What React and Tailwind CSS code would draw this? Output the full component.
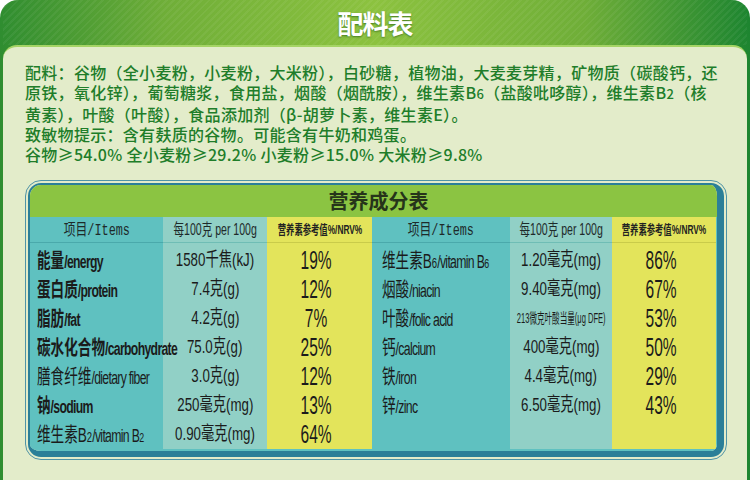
import React from "react";

const leftRows = [
  { cn: "能量", en: "energy", v: "1580千焦(kJ)", p: "19%", b: true },
  { cn: "蛋白质", en: "protein", v: "7.4克(g)", p: "12%", b: true },
  { cn: "脂肪", en: "fat", v: "4.2克(g)", p: "7%", b: true },
  { cn: "碳水化合物", en: "carbohydrate", v: "75.0克(g)", p: "25%", b: true },
  { cn: "膳食纤维", en: "dietary fiber", v: "3.0克(g)", p: "12%" },
  { cn: "钠", en: "sodium", v: "250毫克(mg)", p: "13%", b: true },
  { cn: "维生素B2", en: "vitamin B2", v: "0.90毫克(mg)", p: "64%" },
];

const rightRows = [
  { cn: "维生素B6", en: "vitamin B6", v: "1.20毫克(mg)", p: "86%" },
  { cn: "烟酸", en: "niacin", v: "9.40毫克(mg)", p: "67%" },
  { cn: "叶酸", en: "folic acid", v: "213微克叶酸当量(μg DFE)", p: "53%", tiny: true },
  { cn: "钙", en: "calcium", v: "400毫克(mg)", p: "50%" },
  { cn: "铁", en: "iron", v: "4.4毫克(mg)", p: "29%" },
  { cn: "锌", en: "zinc", v: "6.50毫克(mg)", p: "43%" },
];

// small "6" / "2" after B, like the print on the box
const sub = (s, small = "text-[13px]") =>
  s.split(/(B[26])/).map((part, i) =>
    /^B[26]$/.test(part) ? (
      <span key={i}>
        B<span className={small}>{part[1]}</span>
      </span>
    ) : (
      part
    )
  );

const sans = "font-['Liberation_Sans','Noto_Sans_CJK_SC',sans-serif]";

const Half = ({ rows, padL }) => (
  <>
    {/* name column */}
    <div className="flex flex-col bg-[#5fc1c0]">
      <div className="h-[26px] flex items-center justify-center border-b border-[#4aa9ab]">
        <span className="inline-block whitespace-nowrap scale-x-[0.74] text-[16px] text-[#1e2a2a]">
          <span className="font-['Noto_Sans_CJK_SC',sans-serif]">项目</span>
          <span className="font-['Liberation_Mono',monospace]">/Items</span>
        </span>
      </div>
      <div className="pt-[3px]">
        {rows.map((r) => (
          <div key={r.cn} className={`h-[29px] flex items-center ${padL}`}>
            <span
              className={`inline-block whitespace-nowrap origin-left scale-x-[0.68] text-[20px] text-[#1b1b1b] ${sans} ${
                r.b ? "font-bold" : ""
              }`}
            >
              {sub(r.cn, "text-[14px]")}
              <span className="text-[18px] tracking-[-1px]">/{sub(r.en, "text-[13px]")}</span>
            </span>
          </div>
        ))}
      </div>
    </div>

    {/* per 100g column */}
    <div className="flex flex-col bg-[#91d0c6]">
      <div className="h-[26px] flex items-center justify-center border-b border-[#6fbdb5]">
        <span className={`inline-block whitespace-nowrap scale-x-[0.66] text-[16px] text-[#1e2a2a] ${sans}`}>
          每100克 per 100g
        </span>
      </div>
      <div className="pt-[3px]">
        {rows.map((r) => (
          <div key={r.cn} className="h-[29px] flex items-center justify-center">
            {r.tiny ? (
              <span className={`inline-block whitespace-nowrap scale-x-[0.54] text-[14px] text-[#1b1b1b] ${sans}`}>
                {r.v}
              </span>
            ) : (
              <span className={`inline-block whitespace-nowrap scale-x-[0.7] text-[19px] text-[#1b1b1b] ${sans}`}>
                {r.v}
              </span>
            )}
          </div>
        ))}
      </div>
    </div>

    {/* NRV column */}
    <div className="flex flex-col bg-[#e3e45b]">
      <div className="h-[26px] flex items-center justify-center border-b border-[#c9cb4a]">
        <span className={`inline-block whitespace-nowrap scale-x-[0.64] text-[13px] font-bold text-[#222] ${sans}`}>
          营养素参考值%/NRV%
        </span>
      </div>
      <div className="pt-[3px]">
        {rows.map((r) => (
          <div key={r.cn} className="h-[29px] flex items-center justify-center pr-[6px]">
            <span className={`inline-block whitespace-nowrap scale-x-[0.62] text-[25px] leading-none text-[#1b1b1b] ${sans}`}>
              {r.p}
            </span>
          </div>
        ))}
      </div>
    </div>
  </>
);

export default function App() {
  return (
    <div className="w-[750px] h-[480px] overflow-hidden bg-white">
      <div className="h-full flex flex-col rounded-t-[18px] px-[3px] bg-[linear-gradient(90deg,#2f8d30_0%,#6fae38_22%,#8cc23f_50%,#6fae38_78%,#1d8530_100%)]">
        {/* title band */}
        <div className="h-[45px] flex items-center justify-center bg-[repeating-linear-gradient(135deg,rgba(255,255,255,0.05)_0px,rgba(255,255,255,0.05)_2px,transparent_2px,transparent_5px)]">
          <h1 className="text-[26px] font-bold text-white tracking-[-1px] font-['Noto_Sans_CJK_SC',sans-serif] [text-shadow:0_1px_2px_rgba(0,60,0,0.5)]">
            配料表
          </h1>
        </div>

        {/* cream panel */}
        <div className="flex-1 rounded-t-[14px] border-t-2 border-[#a5d465] bg-[#e3ecca] pt-[15px] px-[22px]">
          <div className="text-[16px] leading-[20px] tracking-[0.3px] font-medium text-[#207d29] font-['Noto_Sans_CJK_SC',sans-serif] whitespace-nowrap">
            <p>配料：谷物（全小麦粉，小麦粉，大米粉），白砂糖，植物油，大麦麦芽精，矿物质（碳酸钙，还</p>
            <p>原铁，氧化锌），葡萄糖浆，食用盐，烟酸（烟酰胺），维生素{sub("B6")}（盐酸吡哆醇），维生素{sub("B2")}（核</p>
            <p>黄素），叶酸（叶酸），食品添加剂（β-胡萝卜素，维生素E）。</p>
            <p>致敏物提示：含有麸质的谷物。可能含有牛奶和鸡蛋。</p>
            <p>谷物≥54.0% 全小麦粉≥29.2% 小麦粉≥15.0% 大米粉≥9.8%</p>
          </div>

          {/* nutrition table */}
          <div className="mt-[16px] w-[702px] rounded-[16px] border-[1.5px] border-[#4f93a6] p-[2px]">
            <div className="rounded-[13px] overflow-hidden border-l-2 border-t-2 border-r-[7px] border-b-[6px] border-[#2b7f98]">
              <div className="h-[32px] flex items-center justify-center bg-[#8bc442]">
                <span className="text-[20px] font-bold text-[#26341a] font-['Noto_Sans_CJK_SC',sans-serif] ml-[10px]">
                  营养成分表
                </span>
              </div>
              <div className="grid grid-cols-[133px_104px_105px_138px_102px_104px] pb-[2px] bg-[#5fc1c0]">
                <Half rows={leftRows} padL="pl-[7px]" />
                <Half rows={rightRows} padL="pl-[10px]" />
              </div>
            </div>
          </div>
        </div>
      </div>
    </div>
  );
}
